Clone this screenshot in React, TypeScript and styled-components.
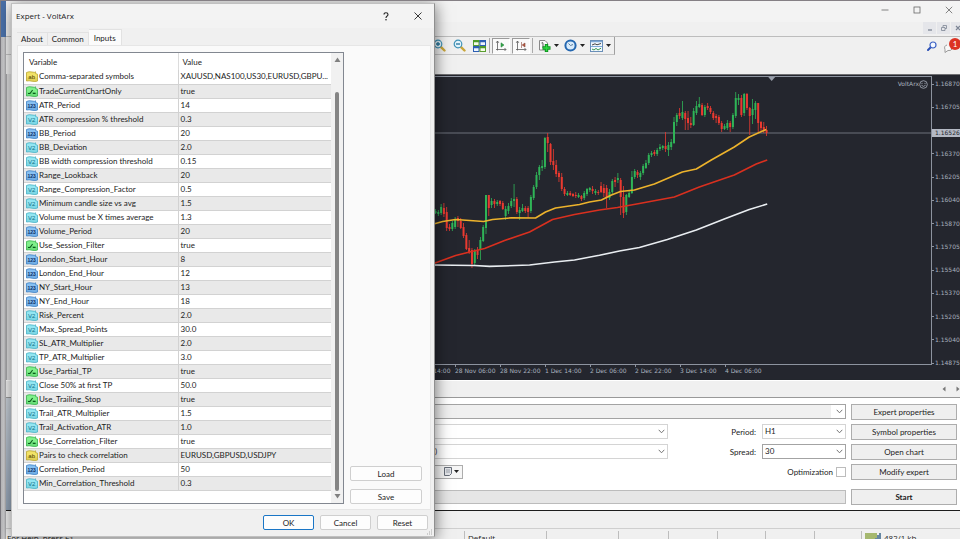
import React from 'react';
import styled, { createGlobalStyle, css } from 'styled-components';

const GlobalStyle = createGlobalStyle`
  *, *::before, *::after { box-sizing: border-box; }
  html, body { margin: 0; height: 100%; overflow: hidden; }
  body { font-family: Lato, "Liberation Sans", Arial, sans-serif; font-size: 8px; color: #1c1c1c; background: #f0f0f0; }
  button, select, input { font: inherit; color: inherit; margin: 0; }
`;

/* ---------- desktop and main window ---------- */

const Screen = styled.div`
  position: relative;
  display: flex;
  height: 100vh;
  overflow: hidden;
  border-top: 1px solid #858085;
  background: #c6c4c6;
`;

const Desktop = styled.div`
  flex: 0 0 6px;
  display: flex;
  flex-direction: column;
  border-left: 1px solid #7c7a80;
`;

const DesktopTop = styled.div`
  height: 36px;
  background: #4a70a8;
`;

const DesktopRest = styled.div`
  flex: 1;
  background: linear-gradient(90deg, #b8b8ba, #cfcfd1 60%, #a4a4a6);
`;

const Terminal = styled.main`
  flex: 1;
  min-width: 0;
  display: flex;
  flex-direction: column;
  background: #f0f0f0;
`;

const Caption = styled.header`
  display: flex;
  justify-content: flex-end;
  height: 21px;
  margin-right: -5px;
  background: #f3f3f3;
`;

const CaptionButton = styled.button`
  width: 32px;
  height: 18px;
  padding: 0;
  border: 0;
  background: none;
  color: #666;
  display: grid;
  place-items: center;
`;

const MenuRow = styled.div`
  display: flex;
  justify-content: flex-end;
  gap: 1px;
  height: 15px;
  margin-right: -4px;
  border-bottom: 1px solid #bdbdbd;
`;

const ChildButton = styled.button`
  width: 13px;
  height: 12px;
  padding: 0;
  border: 0;
  background: #e5e6ea;
  color: #7c8594;
  display: grid;
  place-items: center;
`;

const ToolbarRow = styled.div`
  display: flex;
  justify-content: space-between;
  align-items: flex-start;
  height: 37px;
`;

const Toolbar = styled.div`
  display: flex;
  align-items: center;
  justify-content: flex-end;
  width: 609px;
  height: 18px;
  padding-right: 1px;
  border-right: 1px solid #a0a0a0;
  border-bottom: 1px solid #c4c4c4;
`;

const ToolButton = styled.button<{ $wide?: boolean; $pressed?: boolean }>`
  width: ${p => (p.$wide ? 26 : 20)}px;
  height: 16px;
  padding: 0;
  display: flex;
  align-items: center;
  justify-content: center;
  gap: 3px;
  border: 0;
  background: none;
  ${p => p.$pressed && css`
    width: 18px;
    margin-right: 2px;
    background: #fafafa;
    border: 1px solid #ffffff;
    border-top-color: #9b9b9b;
    border-left-color: #9b9b9b;
  `}
`;

const ToolSeparator = styled.span`
  width: 1px;
  height: 15px;
  margin-right: 2px;
  background: #aaa;
`;

const ToolEnd = styled.div`
  display: flex;
  align-items: center;
  height: 18px;
`;

const AlertButton = styled.button`
  position: relative;
  width: 18px;
  height: 18px;
  padding: 0;
  border: 0;
  background: none;
`;

const AlertBadge = styled.span`
  position: absolute;
  top: 1px;
  right: -1px;
  width: 12px;
  height: 12px;
  border-radius: 50%;
  background: #dc3323;
  color: #fff;
  line-height: 12px;
  text-align: center;
`;

/* ---------- chart ---------- */

const Workspace = styled.div`
  flex: 1;
  min-height: 0;
  display: flex;
`;

const SidePane = styled.aside`
  flex: 0 0 200px;
  border-left: 1px solid #a8a8aa;
  background: #dededf;
`;

const ChartPanel = styled.section`
  flex: 1;
  min-width: 0;
  display: flex;
  flex-direction: column;
  border-top: 1px solid #6f6f72;
  border-bottom: 1px solid #23262d;
  background: #24262e;
  color: #a9b1be;
  font: 6px/10px "DejaVu Sans", sans-serif;
`;

const ChartBody = styled.div`
  flex: 1;
  min-height: 0;
  display: flex;
  padding-top: 1px;
`;

const Plot = styled.div`
  position: relative;
  flex: 1;
  min-width: 0;
  border: 1px solid #8d939f;
  border-left: 0;
`;

const PlotDrawing = styled.svg`
  display: block;
  width: 100%;
  height: 100%;
`;

const ExpertName = styled.div`
  position: absolute;
  top: 2px;
  right: 3px;
  display: flex;
  align-items: center;
`;

const PriceAxis = styled.div`
  position: relative;
  width: 28px;
  margin: 3px 0 -3px;
  display: flex;
  flex-direction: column;
  justify-content: space-between;
`;

const Price = styled.span`
  display: flex;
  align-items: center;
  gap: 1px;
  height: 10px;
  white-space: nowrap;
  &::before { content: ""; width: 2px; height: 1px; background: #8d939f; }
`;

const CurrentPrice = styled.span`
  position: absolute;
  top: 50px;
  left: 0;
  right: 0;
  height: 8px;
  padding-left: 3px;
  line-height: 8px;
  background: #b4b9c4;
  color: #24262e;
`;

const TimeAxis = styled.div`
  display: flex;
  height: 14px;
  padding-left: 204px;
  overflow: hidden;
`;

const TimeMark = styled.span`
  flex: 0 0 45px;
  line-height: 12px;
  white-space: nowrap;
  background: linear-gradient(#8d939f, #8d939f) 0 0 / 1px 2px no-repeat;
`;

/* ---------- strategy tester ---------- */

const ChartTabs = styled.div`
  display: flex;
  justify-content: flex-end;
  align-items: center;
  gap: 9px;
  height: 18px;
  border-top: 1px solid #fff;
  border-bottom: 1px solid #999;
`;

const ArrowButton = styled.button`
  width: 5px;
  height: 10px;
  padding: 0;
  border: 0;
  background: none;
`;

const Tester = styled.section`
  display: flex;
  gap: 5px;
  height: 113px;
  padding-right: 3px;
  background: #fff;
  border-bottom: 1px solid #1d1d1d;
`;

const TesterGrip = styled.div`
  flex: 0 0 10px;
  background: linear-gradient(#c9d0d8, #93a3b6);
`;

const TesterForm = styled.form`
  flex: 1;
  min-width: 0;
  display: flex;
  flex-direction: column;
  gap: 5px;
  padding-top: 6px;
`;

const FormRow = styled.div`
  display: flex;
  align-items: center;
  height: 15px;
`;

const Field = styled.label<{ $grow?: boolean }>`
  display: flex;
  align-items: center;
  justify-content: flex-end;
  gap: 6px;
  flex: ${p => (p.$grow ? '1' : '0 0 178px')};
`;

const SelectFrame = styled.span<{ $fill?: boolean; $tone?: 'grey' | 'pale' }>`
  position: relative;
  display: block;
  width: ${p => (p.$fill ? '100%' : '84px')};
  height: 15px;
  border: 1px solid ${p => (p.$tone === 'pale' ? '#d4d4d4' : '#a3a3a3')};
  background: #fff;
  ${p => p.$tone === 'grey' && css`background: linear-gradient(90deg, #f0f0f0 calc(100% - 14px), #fff 0);`}
`;

const Select = styled.select`
  appearance: none;
  display: block;
  width: 100%;
  height: 13px;
  padding: 0 14px 0 2px;
  border: 0;
  background: transparent;
  line-height: 13px;
`;

const ModelSelect = styled(Select)`
  padding-left: 413px;
`;

const SelectArrow = styled.svg`
  position: absolute;
  right: 2px;
  top: 4px;
  pointer-events: none;
`;

const DateBox = styled.button`
  width: 442px;
  height: 14px;
  padding: 0 3px;
  display: flex;
  align-items: center;
  justify-content: flex-end;
  gap: 2px;
  border: 1px solid #adadad;
  background: #f6f6f6;
`;

const CheckLabel = styled.label`
  margin-left: auto;
  display: flex;
  align-items: center;
  gap: 3px;
`;

const CheckBox = styled.input`
  appearance: none;
  width: 10px;
  height: 10px;
  border: 1px solid #bcbcbc;
  background: #fff;
`;

const Progress = styled.div`
  height: 14px;
  margin-top: 6px;
  border: 1px solid #bcbcbc;
  background: #e6e6e6;
`;

const TesterButtons = styled.div`
  flex: 0 0 106px;
  display: flex;
  flex-direction: column;
  gap: 4px;
  padding-top: 6px;
`;

const TesterButton = styled.button<{ $main?: boolean }>`
  height: 16px;
  padding: 0;
  border: 1px solid #adadad;
  background: #efefef;
  ${p => p.$main && css`font-weight: bold; margin-top: 5px;`}
`;

const StatusBar = styled.footer`
  display: flex;
  height: 11px;
  margin-top: 17px;
  overflow: hidden;
  border-top: 1px solid #cfcfcf;
  font: 8px/17px "Open Sans", sans-serif;
`;

const StatusCell = styled.span<{ $w?: number }>`
  flex: ${p => (p.$w ? `0 0 ${p.$w}px` : '1')};
  height: 17px;
  padding-left: 4px;
  display: flex;
  align-items: center;
  gap: 2px;
  white-space: nowrap;
  & + & { background: linear-gradient(#bdbdbd, #bdbdbd) 0 2px / 1px 15px no-repeat; }
  &:first-child { padding-left: 1px; }
`;

/* ---------- dialog ---------- */

const Dialog = styled.div`
  position: absolute;
  left: 11px;
  top: 2px;
  width: 424px;
  height: 534px;
  display: flex;
  flex-direction: column;
  padding: 0 3px 0 5px;
  border: 1px solid #c0c0c0;
  border-right-color: #8f8f8f;
  background: #f0f0f0;
  box-shadow: 1px 2px 14px rgba(0, 0, 0, 0.5);
`;

const DialogTitle = styled.header`
  display: flex;
  align-items: center;
  justify-content: space-between;
  height: 24px;
  margin: 0 -3px 0 -5px;
  padding: 0 6px 0 4px;
  background: #f3f3f3;
  font: 8px/24px "Open Sans", sans-serif;
`;

const TitleButtons = styled.span`
  display: flex;
  gap: 12px;
`;

const TitleButton = styled.button`
  width: 20px;
  height: 20px;
  padding: 0;
  border: 0;
  background: none;
  display: grid;
  place-items: center;
`;

const Tabs = styled.div`
  display: flex;
  align-items: flex-end;
  height: 17px;
`;

const Tab = styled.button<{ $active?: boolean }>`
  height: 13px;
  padding: 0 4px;
  border: 1px solid #e2e2e2;
  border-width: 1px 1px 0 0;
  background: #f0f0f0;
  line-height: 12px;
  ${p => p.$active && css`
    height: 16px;
    padding: 0 5px;
    background: #fbfbfb;
  `}
`;

const TabPage = styled.div`
  flex: 1;
  min-height: 0;
  display: flex;
  gap: 6px;
  padding: 6px 8px 5px 5px;
  border: 1px solid #e6e6e6;
  background: #fafafa;
`;

const ListFrame = styled.div`
  flex: 1;
  display: flex;
  border: 1px solid #828790;
  background: #fff;
`;

const ListArea = styled.div`
  flex: 1;
  min-width: 0;
`;

const ParamTable = styled.table`
  width: 100%;
  table-layout: fixed;
  border-collapse: collapse;
`;

const HeadCell = styled.th<{ $w?: number }>`
  width: ${p => (p.$w ? `${p.$w}px` : 'auto')};
  height: 17px;
  padding: 0 5px;
  font-weight: normal;
  text-align: left;
  & + & { padding-left: 4px; border-left: 1px solid #dcdcdc; }
`;

const ParamRow = styled.tr`
  &:nth-child(even) { background: #e9e9e9; }
`;

const ParamCell = styled.td`
  height: 14px;
  padding: 0 2px;
  border-bottom: 1px solid #d2d2d2;
  line-height: 13px;
  white-space: nowrap;
  overflow: hidden;
  text-overflow: ellipsis;
  & + & { border-left: 1px solid #d2d2d2; }
`;

const ParamName = styled.span`
  display: flex;
  align-items: center;
  gap: 1px;
`;

const ScrollBar = styled.div`
  flex: 0 0 12px;
  display: flex;
  flex-direction: column;
  align-items: center;
  gap: 3px;
  padding: 4px 0;
  background: #f1f1f1;
`;

const ScrollThumb = styled.div`
  flex: 1;
  width: 4px;
  margin-top: 27px;
  border-radius: 2px;
  background: #858585;
`;

const SideButtons = styled.div`
  flex: 0 0 72px;
  display: flex;
  flex-direction: column;
  justify-content: flex-end;
  gap: 8px;
`;

const DialogButton = styled.button<{ $default?: boolean }>`
  height: 15px;
  padding: 0;
  border: 1px solid ${p => (p.$default ? '#1a76c6' : '#cfcfcf')};
  border-radius: 2px;
  background: #fdfdfd;
`;

const DialogFooter = styled.footer`
  display: grid;
  grid-template-columns: repeat(3, 51px);
  justify-content: end;
  align-items: start;
  gap: 6px;
  height: 26px;
  padding: 5px 3px 0 0;
`;

const ResizeGrip = styled.svg`
  position: absolute;
  right: 1px;
  bottom: 1px;
`;

/* ---------- data ---------- */

type Kind = 'text' | 'bool' | 'int' | 'real';

const params: [Kind, string, string][] = [
  ['text', 'Comma-separated symbols', 'XAUUSD,NAS100,US30,EURUSD,GBPU...'],
  ['bool', 'TradeCurrentChartOnly', 'true'],
  ['int', 'ATR_Period', '14'],
  ['real', 'ATR compression % threshold', '0.3'],
  ['int', 'BB_Period', '20'],
  ['real', 'BB_Deviation', '2.0'],
  ['real', 'BB width compression threshold', '0.15'],
  ['int', 'Range_Lookback', '20'],
  ['real', 'Range_Compression_Factor', '0.5'],
  ['real', 'Minimum candle size vs avg', '1.5'],
  ['real', 'Volume must be X times average', '1.3'],
  ['int', 'Volume_Period', '20'],
  ['bool', 'Use_Session_Filter', 'true'],
  ['int', 'London_Start_Hour', '8'],
  ['int', 'London_End_Hour', '12'],
  ['int', 'NY_Start_Hour', '13'],
  ['int', 'NY_End_Hour', '18'],
  ['real', 'Risk_Percent', '2.0'],
  ['real', 'Max_Spread_Points', '30.0'],
  ['real', 'SL_ATR_Multiplier', '2.0'],
  ['real', 'TP_ATR_Multiplier', '3.0'],
  ['bool', 'Use_Partial_TP', 'true'],
  ['real', 'Close 50% at first TP', '50.0'],
  ['bool', 'Use_Trailing_Stop', 'true'],
  ['real', 'Trail_ATR_Multiplier', '1.5'],
  ['real', 'Trail_Activation_ATR', '1.0'],
  ['bool', 'Use_Correlation_Filter', 'true'],
  ['text', 'Pairs to check correlation', 'EURUSD,GBPUSD,USDJPY'],
  ['int', 'Correlation_Period', '50'],
  ['real', 'Min_Correlation_Threshold', '0.3'],
];

/* the empty step is where the current price tag sits */
const prices = [
  '1.16870', '1.16705', '', '1.16370', '1.16205', '1.16040', '1.15870',
  '1.15705', '1.15540', '1.15370', '1.15205', '1.15040', '1.14875',
];

const times = [
  '27 Nov 14:00', '28 Nov 06:00', '28 Nov 22:00', '1 Dec 14:00',
  '2 Dec 06:00', '2 Dec 22:00', '3 Dec 14:00', '4 Dec 06:00',
];

/* direction (1 up, 0 down), high, body top, body bottom, low */
type Candle = [number, number, number, number, number];

const candles: Candle[] = [
  [1, 209, 211, 213, 214], [1, 210, 212, 214, 216], [1, 204, 207, 213, 215], [0, 203, 208, 214, 217],
  [0, 207, 212, 228, 231], [0, 224, 227, 229, 231], [1, 221, 223, 229, 231], [1, 217, 219, 227, 229],
  [0, 216, 218, 221, 227], [0, 218, 221, 228, 229], [0, 223, 227, 236, 238], [0, 233, 235, 249, 250],
  [0, 240, 248, 252, 254], [0, 248, 250, 264, 268], [1, 249, 251, 263, 266], [0, 247, 250, 255, 259],
  [1, 237, 240, 250, 260], [1, 225, 227, 241, 242], [1, 195, 195, 228, 234], [0, 195, 195, 208, 216],
  [1, 198, 201, 205, 208], [0, 199, 201, 204, 208], [1, 200, 202, 204, 206], [0, 200, 201, 204, 206],
  [0, 201, 203, 209, 210], [1, 206, 209, 216, 220], [1, 203, 206, 211, 214], [1, 198, 201, 206, 208],
  [1, 184, 199, 201, 207], [0, 197, 199, 212, 214], [1, 207, 210, 213, 220], [1, 204, 208, 211, 212],
  [0, 206, 208, 211, 213], [0, 206, 208, 212, 218], [1, 195, 197, 211, 213], [1, 185, 187, 198, 200],
  [1, 172, 175, 187, 189], [1, 165, 167, 175, 180], [1, 160, 166, 168, 171], [1, 137, 138, 167, 169],
  [0, 133, 137, 143, 152], [0, 143, 144, 162, 165], [0, 149, 161, 165, 170], [0, 160, 165, 174, 177],
  [0, 171, 173, 177, 182], [0, 173, 177, 189, 191], [0, 187, 189, 194, 196], [1, 191, 193, 195, 196],
  [0, 191, 193, 195, 196], [0, 193, 194, 196, 197], [0, 192, 195, 196, 198], [1, 193, 195, 197, 198],
  [0, 195, 196, 199, 201], [1, 191, 193, 198, 200], [1, 188, 189, 194, 196], [1, 187, 188, 190, 192],
  [0, 186, 189, 191, 194], [1, 189, 191, 193, 195], [0, 190, 192, 193, 195],
  [0, 182, 186, 192, 193], [0, 184, 188, 193, 197], [0, 185, 188, 197, 208], [1, 189, 192, 198, 200],
  [1, 179, 181, 192, 194], [0, 177, 180, 182, 187], [1, 173, 178, 180, 183], [0, 178, 180, 197, 215],
  [0, 186, 197, 213, 218], [1, 194, 195, 212, 215], [1, 190, 193, 197, 198], [1, 171, 177, 193, 194],
  [1, 169, 171, 177, 179], [0, 170, 172, 175, 178], [1, 171, 173, 177, 180], [1, 164, 166, 173, 175],
  [1, 160, 163, 168, 169], [1, 153, 155, 163, 165], [1, 151, 153, 155, 157], [0, 150, 152, 154, 156],
  [1, 148, 150, 154, 156], [1, 144, 147, 149, 151], [1, 145, 146, 148, 150], [0, 132, 146, 149, 152],
  [1, 142, 145, 150, 156], [1, 139, 142, 147, 150], [1, 117, 122, 143, 144], [1, 113, 115, 122, 126],
  [0, 108, 113, 116, 119], [1, 101, 112, 118, 120], [0, 111, 113, 119, 130], [0, 111, 118, 123, 130],
  [0, 117, 123, 125, 128], [1, 108, 111, 125, 126], [1, 101, 106, 113, 115], [1, 97, 104, 107, 108],
  [0, 103, 105, 115, 116], [1, 105, 107, 115, 117], [0, 103, 106, 108, 110], [0, 106, 108, 112, 114],
  [0, 111, 113, 118, 120], [0, 114, 116, 118, 123], [0, 115, 117, 123, 125], [0, 121, 123, 129, 132],
  [1, 124, 126, 129, 130], [1, 120, 123, 128, 130], [0, 121, 123, 127, 132], [1, 113, 115, 127, 129],
  [1, 92, 98, 116, 118], [1, 94, 98, 100, 105], [0, 95, 98, 115, 117], [1, 93, 94, 113, 116],
  [0, 93, 94, 108, 110], [0, 107, 108, 116, 135], [1, 99, 109, 115, 124], [1, 101, 103, 110, 119],
  [0, 103, 103, 123, 132], [0, 121, 122, 128, 131], [0, 122, 127, 131, 133], [0, 126, 130, 133, 136],
];

/* ---------- icons ---------- */

const tiles: Record<Kind, { fill: string; edge: string; ink: string; mark: string }> = {
  text: { fill: '#f2e266', edge: '#b9a52e', ink: '#4a4000', mark: 'ab' },
  bool: { fill: '#7ff08a', edge: '#35b04a', ink: '#0b5a1c', mark: '' },
  int: { fill: '#86c0f2', edge: '#3a7fc4', ink: '#0d2f66', mark: '123' },
  real: { fill: '#93e6f2', edge: '#42b0c4', ink: '#12748c', mark: 'V2' },
};

const KindIcon = ({ kind }: { kind: Kind }) => {
  const t = tiles[kind];
  return (
    <svg width="12" height="11" viewBox="0 0 12 11" aria-hidden="true">
      <path d="M.5 1.5 Q3 .2 6 1 T9.6 .8 V2.6 L11.5 3.2 V10 Q9 11 6 10.2 T.5 10 Z" fill={t.fill} stroke={t.edge} strokeWidth=".8" />
      <path d="M.9 6.5 Q5 5 11 7 V9.8 Q9 10.6 6 9.8 T.9 9.8 Z" fill={t.edge} opacity=".25" />
      {kind === 'bool'
        ? <path d="M2 7.5 H4 L6.6 4 M6.8 7.4 H9.6" fill="none" stroke={t.ink} strokeWidth="1.1" />
        : <text x="5.7" y="8" textAnchor="middle" fontSize={kind === 'int' ? 5 : 6} fontWeight={kind === 'int' ? 700 : 400} fontFamily="Liberation Sans, sans-serif" fill={t.ink}>{t.mark}</text>}
    </svg>
  );
};

const Magnifier = ({ plus }: { plus?: boolean }) => (
  <svg width="13" height="13" viewBox="0 0 13 13" aria-hidden="true">
    <path d="M7.8 7.8 L11.5 11.5" stroke="#c9a63a" strokeWidth="2.4" strokeLinecap="round" />
    <circle cx="5" cy="5" r="3.8" fill="#e4f4fb" stroke="#3f93b8" strokeWidth="1.2" />
    <path d={plus ? 'M3 5 H7 M5 3 V7' : 'M3 5 H7'} stroke="#23759c" strokeWidth="1.3" />
  </svg>
);

const TileIcon = () => (
  <svg width="13" height="12" viewBox="0 0 13 12" aria-hidden="true">
    <rect x=".5" y=".5" width="5.5" height="5" fill="#f5fbe9" stroke="#5a9e2f" />
    <rect x="7" y=".5" width="5.5" height="5" fill="#eef4fd" stroke="#2d5fb3" />
    <rect x=".5" y="6.5" width="5.5" height="5" fill="#eef4fd" stroke="#2d5fb3" />
    <rect x="7" y="6.5" width="5.5" height="5" fill="#f5fbe9" stroke="#5a9e2f" />
    <path d="M0 1.2 H6.5 M6.5 7.2 H13" stroke="#4f9a2a" strokeWidth="2" />
    <path d="M6.5 1.2 H13 M0 7.2 H6.5" stroke="#2d5fb3" strokeWidth="2" />
  </svg>
);

const AxisIcon = ({ shift }: { shift?: boolean }) => (
  <svg width="12" height="12" viewBox="0 0 12 12" aria-hidden="true">
    <path d="M2.5 1 V10.5 M1 9.5 H11 M1.2 2.8 L2.5 1 L3.8 2.8 M9.5 8 L11 9.5 L9.5 11" fill="none" stroke="#5c5c5c" strokeWidth=".8" />
    {shift
      ? <path d="M6.5 2 V8 M10 3 L7.2 5 L10 7 Z" fill="#b4543c" stroke="#8b4a3c" strokeWidth=".6" />
      : <path d="M6 2.8 L9 5 L6 7.2 Z" fill="#36a84c" stroke="#1f7d34" strokeWidth=".5" />}
  </svg>
);

const IndicatorIcon = () => (
  <svg width="13" height="13" viewBox="0 0 13 13" aria-hidden="true">
    <path d="M1.5 1.5 H7 L9.5 4 V11 H1.5 Z" fill="#fafafa" stroke="#888" />
    <path d="M3.5 4 Q5 2.5 5 5 V9" fill="none" stroke="#555" />
    <path d="M8.5 5 V13 M4.5 9 H12.5" stroke="#0a8f1d" strokeWidth="3.4" />
    <path d="M8.5 5.8 V12.2 M5.3 9 H11.7" stroke="#2ed840" strokeWidth="1.6" />
  </svg>
);

const ClockIcon = () => (
  <svg width="13" height="13" viewBox="0 0 13 13" aria-hidden="true">
    <circle cx="6.5" cy="6.5" r="5.1" fill="#d8ebfb" stroke="#2467b0" strokeWidth="2" />
    <path d="M6.5 6.5 L4.5 4.5 M6.5 6.5 L9 5.5" stroke="#5b7c9c" />
  </svg>
);

const TemplateIcon = () => (
  <svg width="13" height="12" viewBox="0 0 13 12" aria-hidden="true">
    <rect x=".5" y=".5" width="12" height="11" fill="#f2f8fd" stroke="#6a8fb8" />
    <path d="M1 1.6 H12 M1 6.5 H12" stroke="#7fa9d6" strokeWidth="1.2" />
    <path d="M2 5 L5 3.8 L7 4.8 L11 3.5" fill="none" stroke="#444" />
    <path d="M2 9 L4 10 L6 8.4 L8 10 L11 8.2" fill="none" stroke="#3b9b52" />
  </svg>
);

const DownTriangle = () => (
  <svg width="5" height="3" viewBox="0 0 5 3" aria-hidden="true"><path d="M0 0 H5 L2.5 3 Z" fill="#222" /></svg>
);

const Chevron = () => (
  <SelectArrow width="7" height="5" viewBox="0 0 7 5" aria-hidden="true">
    <path d="M.7 .8 L3.5 3.8 L6.3 .8" fill="none" stroke="#666" strokeWidth=".9" />
  </SelectArrow>
);

/* ---------- parts ---------- */

const ChartPlot = () => (
  <PlotDrawing viewBox="206 77 726 287" preserveAspectRatio="none" role="img" aria-label="Price chart">
    <path d="M206 133 H932" stroke="#555962" strokeWidth="1.4" />
    {candles.map(([up, high, top, bottom, low], i) => {
      const x = 435.8 + i * 2.81;
      const colour = up ? '#2fb457' : '#ea3a30';
      return (
        <g key={i} fill={colour}>
          <rect x={x - 0.4} y={high} width=".8" height={low - high} />
          <rect x={x - 1} y={top} width="2" height={bottom - top} />
        </g>
      );
    })}
    <g fill="none" strokeWidth="1.6" strokeLinejoin="round">
      <polyline stroke="#e9edf1" points="420,265 434,265 475,265.5 490,266.4 530,265 555,262 575,260 600,255.3 620,251 640,247.5 668,239.5 697,230 725,219 750,209.5 768,204" />
      <polyline stroke="#d9301f" points="420,268 434,263.5 456,255.5 470,252 485,248.5 505,240.5 530,232 553,219.5 575,214.5 600,210 618,207.5 640,203.5 675,197 700,187 735,175 757,164 768,160" />
      <polyline stroke="#edb32c" points="420,228 434,224 443,221.5 456,219.5 470,220.5 484,221.5 493,219.5 512,217.8 536,218 546,212 556,208 580,204.5 590,202 602,200 612,195 621,191.5 635,190 655,184 683,172 697,169 712,160 735,147 750,137 767,129.5" />
    </g>
    <path d="M769 77 H776 L772.5 81 Z" fill="#9aa0ac" />
  </PlotDrawing>
);

const InputsDialog = () => (
  <Dialog role="dialog" aria-label="Expert - VoltArx">
    <DialogTitle>
      <span>Expert - VoltArx</span>
      <TitleButtons>
        <TitleButton aria-label="Help">
          <svg width="6" height="9" viewBox="0 0 6 9"><path d="M1 2.4 Q1 .8 3 .8 T5 2.5 Q5 3.6 3.9 4.2 Q3 4.8 3 6" fill="none" stroke="#222" strokeWidth="1.1" /><circle cx="3" cy="7.8" r=".8" fill="#222" /></svg>
        </TitleButton>
        <TitleButton aria-label="Close">
          <svg width="8" height="8" viewBox="0 0 8 8"><path d="M.5 .5 L7.5 7.5 M7.5 .5 L.5 7.5" stroke="#222" strokeWidth=".9" /></svg>
        </TitleButton>
      </TitleButtons>
    </DialogTitle>
    <Tabs role="tablist">
      <Tab role="tab">About</Tab>
      <Tab role="tab">Common</Tab>
      <Tab role="tab" aria-selected="true" $active>Inputs</Tab>
    </Tabs>
    <TabPage>
      <ListFrame>
        <ListArea>
          <ParamTable>
            <thead>
              <tr>
                <HeadCell $w={154}>Variable</HeadCell>
                <HeadCell>Value</HeadCell>
              </tr>
            </thead>
            <tbody>
              {params.map(([kind, name, value]) => (
                <ParamRow key={name}>
                  <ParamCell><ParamName><KindIcon kind={kind} />{name}</ParamName></ParamCell>
                  <ParamCell>{value}</ParamCell>
                </ParamRow>
              ))}
            </tbody>
          </ParamTable>
        </ListArea>
        <ScrollBar>
          <svg width="7" height="5" viewBox="0 0 7 5" aria-hidden="true"><path d="M.5 5 L3.5 .5 L6.5 5 Z" fill="#808080" /></svg>
          <ScrollThumb />
          <svg width="7" height="5" viewBox="0 0 7 5" aria-hidden="true"><path d="M.5 0 L3.5 4.5 L6.5 0 Z" fill="#808080" /></svg>
        </ScrollBar>
      </ListFrame>
      <SideButtons>
        <DialogButton>Load</DialogButton>
        <DialogButton>Save</DialogButton>
      </SideButtons>
    </TabPage>
    <DialogFooter>
      <DialogButton $default>OK</DialogButton>
      <DialogButton>Cancel</DialogButton>
      <DialogButton>Reset</DialogButton>
    </DialogFooter>
    <ResizeGrip width="6" height="6" viewBox="0 0 6 6" aria-hidden="true">
      <path d="M4.5 .5 V1.5 M4.5 2.5 V3.5 M4.5 4.5 V5.5 M2.5 2.5 V3.5 M2.5 4.5 V5.5 M.5 4.5 V5.5" stroke="#a8a8a8" />
    </ResizeGrip>
  </Dialog>
);

const App = () => (
  <>
    <GlobalStyle />
    <Screen>
      <Desktop>
        <DesktopTop />
        <DesktopRest />
      </Desktop>
      <Terminal>
        <Caption>
          <CaptionButton aria-label="Minimize"><svg width="8" height="8" viewBox="0 0 8 8"><path d="M.5 4 H7.5" stroke="currentColor" strokeWidth=".8" /></svg></CaptionButton>
          <CaptionButton aria-label="Maximize"><svg width="8" height="8" viewBox="0 0 8 8"><rect x="1" y="1" width="6" height="6" fill="none" stroke="currentColor" strokeWidth=".8" /></svg></CaptionButton>
          <CaptionButton aria-label="Close window"><svg width="8" height="8" viewBox="0 0 8 8"><path d="M.8 .8 L7.2 7.2 M7.2 .8 L.8 7.2" stroke="currentColor" strokeWidth=".8" /></svg></CaptionButton>
        </Caption>
        <MenuRow>
          <ChildButton aria-label="Minimize chart"><svg width="6" height="6" viewBox="0 0 6 6"><path d="M1 5 H5" stroke="currentColor" strokeWidth="1.3" /></svg></ChildButton>
          <ChildButton aria-label="Restore chart"><svg width="6" height="6" viewBox="0 0 6 6"><path d="M2 2 V.5 H5.5 V3.5 H4 M.5 2.5 H4 V5.5 H.5 Z" fill="none" stroke="currentColor" strokeWidth=".8" /></svg></ChildButton>
          <ChildButton aria-label="Close chart"><svg width="6" height="6" viewBox="0 0 6 6"><path d="M1 1 L5 5 M5 1 L1 5" stroke="currentColor" strokeWidth="1.2" /></svg></ChildButton>
        </MenuRow>
        <ToolbarRow>
          <Toolbar>
            <ToolButton aria-label="Zoom in"><Magnifier plus /></ToolButton>
            <ToolButton aria-label="Zoom out"><Magnifier /></ToolButton>
            <ToolButton aria-label="Tile windows"><TileIcon /></ToolButton>
            <ToolSeparator />
            <ToolButton $pressed aria-label="Auto scroll"><AxisIcon /></ToolButton>
            <ToolButton $pressed aria-label="Chart shift"><AxisIcon shift /></ToolButton>
            <ToolSeparator />
            <ToolButton $wide aria-label="Indicators"><IndicatorIcon /><DownTriangle /></ToolButton>
            <ToolButton $wide aria-label="Periods"><ClockIcon /><DownTriangle /></ToolButton>
            <ToolButton $wide aria-label="Templates"><TemplateIcon /><DownTriangle /></ToolButton>
          </Toolbar>
          <ToolEnd>
            <ToolButton aria-label="Search">
              <svg width="10" height="10" viewBox="0 0 10 10"><path d="M4 6 L1 9" stroke="#2a4fb5" strokeWidth="2" strokeLinecap="round" /><circle cx="6" cy="4" r="3" fill="#f4f8ff" stroke="#3c62c4" strokeWidth="1.2" /></svg>
            </ToolButton>
            <AlertButton aria-label="Alerts">
              <svg width="18" height="18" viewBox="0 0 18 18"><path d="M5 8 Q1.5 9 3 12.5 L3 15.5 L6 13.5 Q9 14 10 12" fill="#f8f8f8" stroke="#9a9a9a" /></svg>
              <AlertBadge>1</AlertBadge>
            </AlertButton>
          </ToolEnd>
        </ToolbarRow>
        <Workspace>
          <SidePane />
          <ChartPanel>
            <ChartBody>
              <Plot>
                <ChartPlot />
                <ExpertName>
                  VoltArx
                  <svg width="9" height="9" viewBox="0 0 9 9" aria-hidden="true"><circle cx="4.5" cy="4.5" r="3.8" fill="none" stroke="currentColor" strokeWidth=".8" /><path d="M2.4 5.2 Q4.5 7.6 6.6 5.2 M3 2.8 V4 M6 2.8 V4" fill="none" stroke="currentColor" strokeWidth=".8" /></svg>
                </ExpertName>
              </Plot>
              <PriceAxis>
                {prices.map((p, i) => <Price key={i}>{p}</Price>)}
                <CurrentPrice>1.16526</CurrentPrice>
              </PriceAxis>
            </ChartBody>
            <TimeAxis>
              {times.map(t => <TimeMark key={t}>{t}</TimeMark>)}
            </TimeAxis>
          </ChartPanel>
        </Workspace>
        <ChartTabs>
          <ArrowButton aria-label="Previous charts"><svg width="4" height="6" viewBox="0 0 4 6"><path d="M3.5 .5 L.5 3 L3.5 5.5 Z" fill="#777" /></svg></ArrowButton>
          <ArrowButton aria-label="Next charts"><svg width="4" height="6" viewBox="0 0 4 6"><path d="M.5 .5 L3.5 3 L.5 5.5 Z" fill="#777" /></svg></ArrowButton>
        </ChartTabs>
        <Tester>
          <TesterGrip />
          <TesterForm>
            <FormRow>
              <SelectFrame $fill $tone="grey"><Select aria-label="Expert" /><Chevron /></SelectFrame>
            </FormRow>
            <FormRow>
              <Field $grow><SelectFrame $fill $tone="pale"><Select aria-label="Symbol" /><Chevron /></SelectFrame></Field>
              <Field>Period:<SelectFrame $tone="pale"><Select><option>H1</option></Select><Chevron /></SelectFrame></Field>
            </FormRow>
            <FormRow>
              <Field $grow><SelectFrame $fill $tone="pale"><ModelSelect aria-label="Model"><option>)</option></ModelSelect><Chevron /></SelectFrame></Field>
              <Field>Spread:<SelectFrame><Select><option>30</option></Select><Chevron /></SelectFrame></Field>
            </FormRow>
            <FormRow>
              <DateBox type="button" aria-label="To date">
                <svg width="8" height="9" viewBox="0 0 8 9"><path d="M.5 .5 H7.5 V6.5 L5.5 8.5 H.5 Z" fill="#e4e6ea" stroke="#666d78" /><path d="M2 3 H6 M2 5 H6" stroke="#9aa0aa" /></svg>
                <DownTriangle />
              </DateBox>
              <CheckLabel>Optimization<CheckBox type="checkbox" /></CheckLabel>
            </FormRow>
            <Progress role="progressbar" aria-label="Test progress" />
          </TesterForm>
          <TesterButtons>
            <TesterButton>Expert properties</TesterButton>
            <TesterButton>Symbol properties</TesterButton>
            <TesterButton>Open chart</TesterButton>
            <TesterButton>Modify expert</TesterButton>
            <TesterButton $main>Start</TesterButton>
          </TesterButtons>
        </Tester>
        <StatusBar>
          <StatusCell $w={458}>For Help, press F1</StatusCell>
          <StatusCell $w={82}>Default</StatusCell>
          <StatusCell $w={72} />
          <StatusCell $w={50} />
          <StatusCell $w={49} />
          <StatusCell $w={48} />
          <StatusCell $w={49} />
          <StatusCell $w={47} />
          <StatusCell>
            <svg width="17" height="10" viewBox="0 0 17 10" aria-hidden="true">
              <path d="M1 0 V10 M3 0 V10 M5 0 V9 M7 0 V8 M9 0 V6 M11 0 V5" stroke="#7d9a2a" strokeWidth="1.3" />
              <path d="M5 9 V10 M7 8 V10 M9 6 V10 M11 5 V10 M13 2 V10 M15 0 V10" stroke="#1d4f7a" strokeWidth="1.3" />
            </svg>
            482/1 kb
          </StatusCell>
        </StatusBar>
      </Terminal>
      <InputsDialog />
    </Screen>
  </>
);

export default App;
